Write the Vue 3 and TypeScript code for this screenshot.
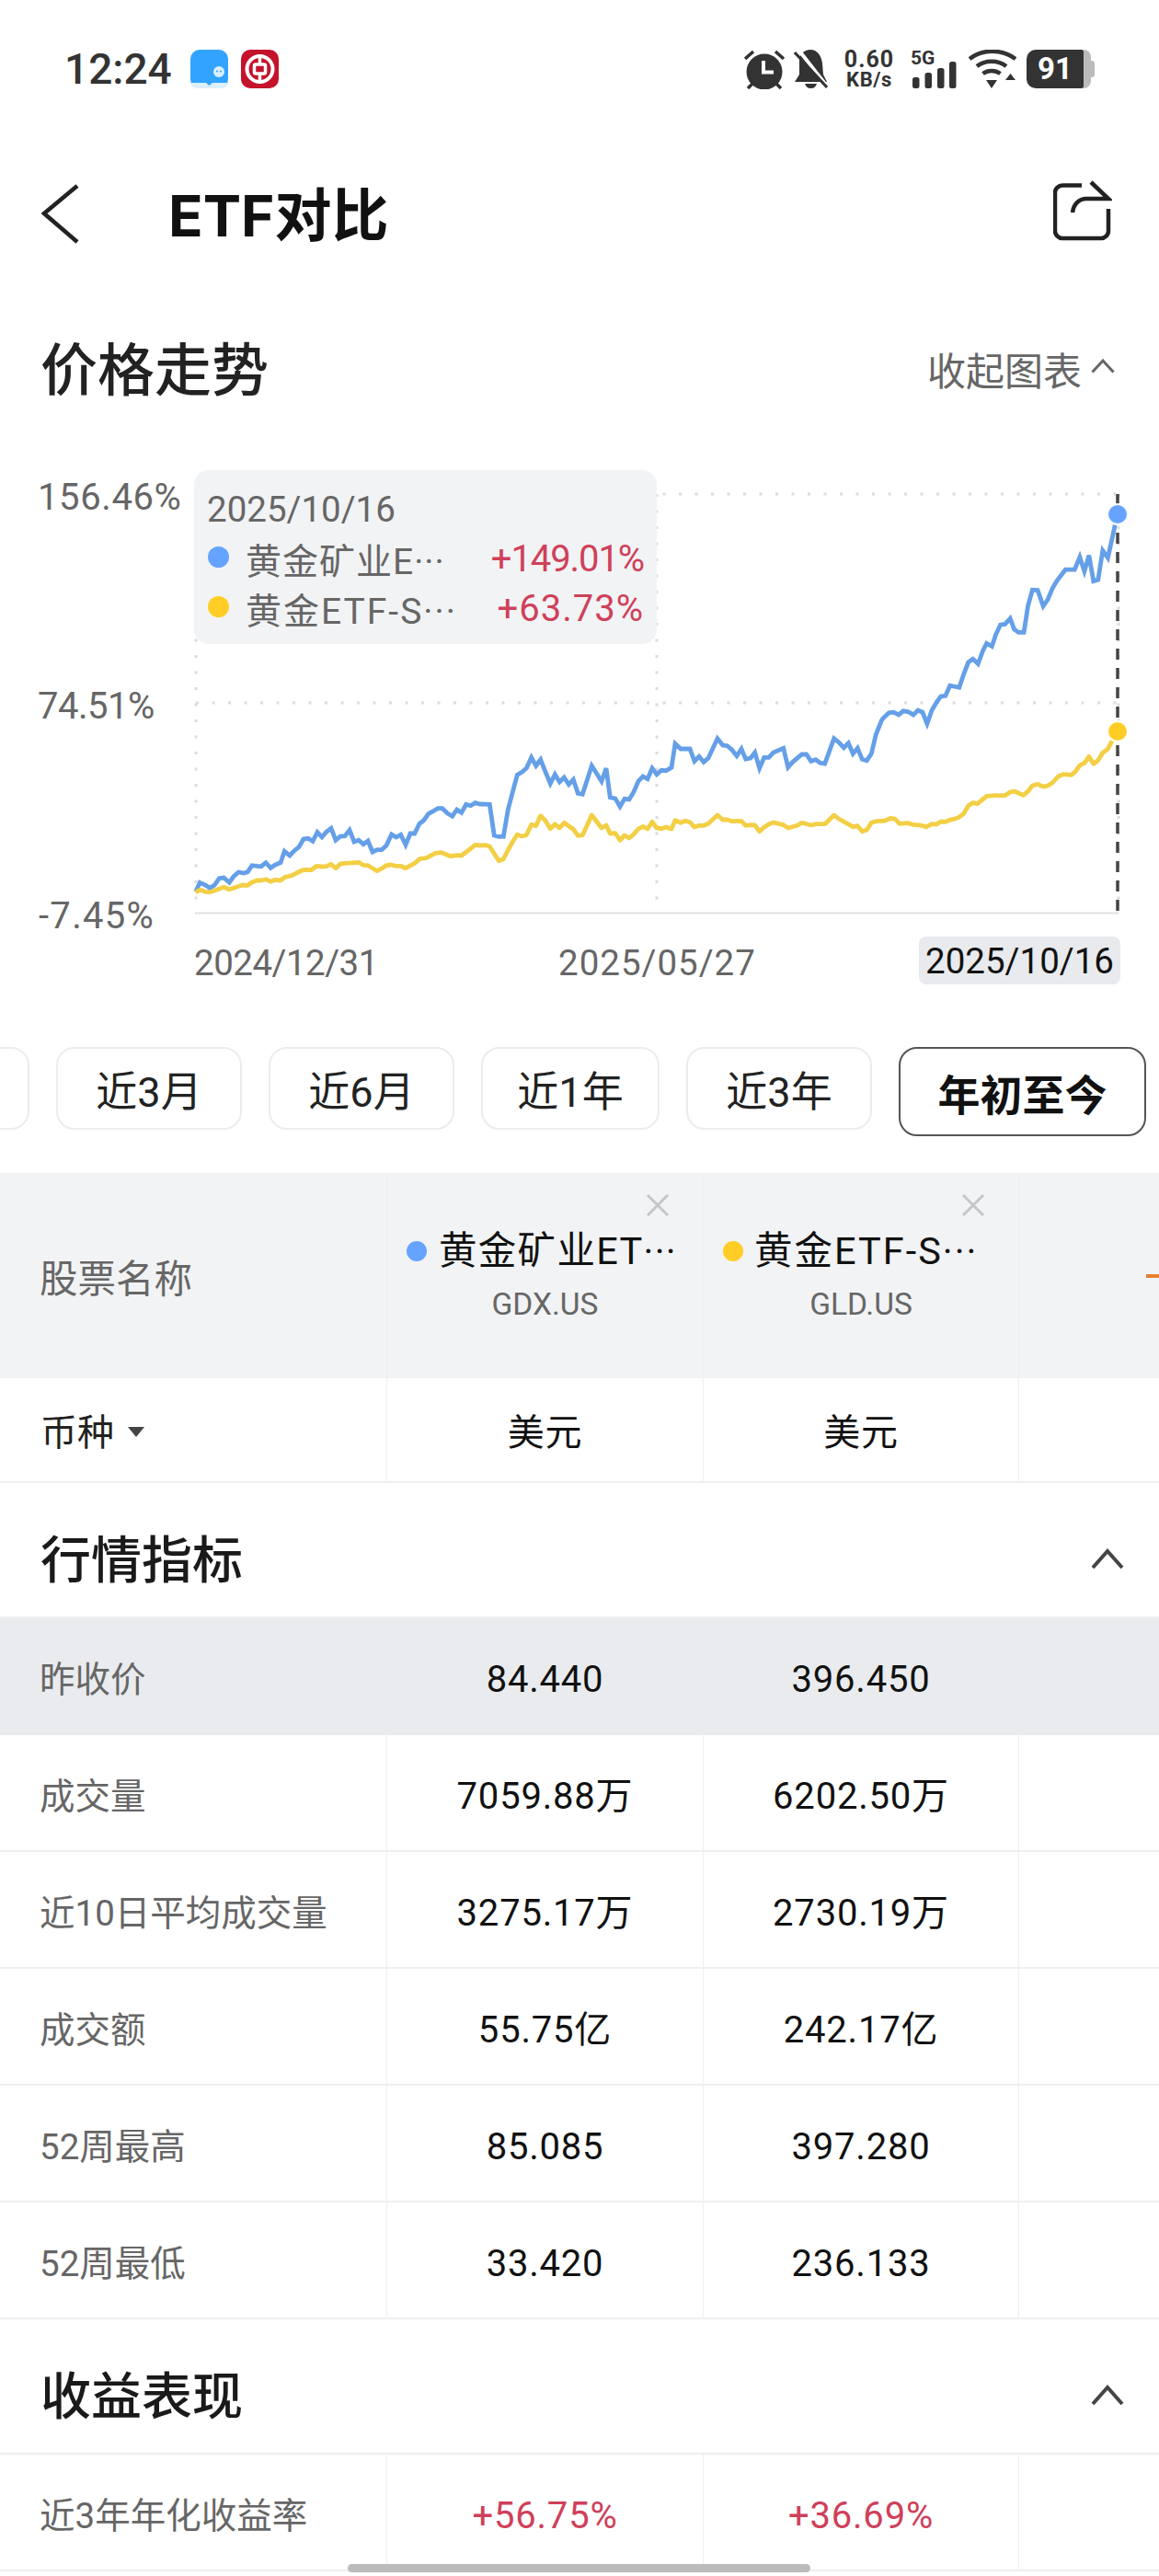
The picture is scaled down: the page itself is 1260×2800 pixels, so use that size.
<script setup lang="ts">
type P = [number, number]
const z9 = (a: number[]): P[] => chunk(a).map(([x, y]) => [200 + x / 3, 780 + y / 3])
const z10 = (a: number[]): P[] => chunk(a).map(([x, y]) => [560 + x / 3, 740 + y / 3])
const z11 = (a: number[]): P[] => chunk(a).map(([x, y]) => [900 + x / 3.012, 540 + y / 2.904])
function chunk(a: number[]): P[] {
  const r: P[] = []
  for (let i = 0; i < a.length; i += 2) r.push([a[i], a[i + 1]])
  return r
}
const toPts = (p: P[]) => p.map(([x, y]) => `${x.toFixed(1)},${y.toFixed(1)}`).join(' ')

const blue = toPts([
  ...z9([38,568,52,538,70,546,85,556,100,546,115,524,130,522,148,538,162,518,178,504,195,507,208,503,222,482,238,484,252,485,267,473,283,490,298,480,315,473,328,436,345,450,360,434,375,422,390,396,405,394,420,403,435,374,450,390,465,372,480,361,495,400,510,387,525,386,540,367,555,405,570,400,585,413,600,402,615,438,630,431,645,431,660,417,677,381,692,390,707,382,723,415,738,378,752,378,768,346,782,335,797,314,813,305,828,296,843,296,858,311,875,322,890,300,905,310,920,283,935,287,950,278,965,282,997,283,1012,384,1027,388,1042,388,1057,300,1072,243,1087,187,1102,178,1117,165,1133,130,1148,157,1163,137,1178,175,1195,215]),
  ...z10([130,305,145,330,160,315,175,338,190,322,205,367,220,370,250,277,282,328,297,285,310,380,327,384,342,410,357,385,372,387,387,362,402,327,417,312,432,320,447,285,462,305,477,292,492,293,510,283,522,205,540,222,570,222,585,262,600,247,615,265,630,252,660,188,677,210,692,212,707,225,723,245,738,222,752,255,768,252,782,234,797,285,812,250,827,250,842,234,875,220,890,282,905,265,935,240,950,240,965,262,980,257,995,268,1010,270,1040,188,1055,200,1072,218,1087,203,1102,238,1117,220,1132,256,1147,260,1162,238,1177,175,1195,130]),
  ...z11([180,700,200,682,215,680,232,688,247,676,262,678,280,688,295,674,310,680,325,716,340,675,355,650,370,630,385,628,400,596,430,602,445,560,460,522,475,512,492,527,508,485,520,463,537,472,550,435,565,404,580,402,597,384,610,418,625,428,642,428,655,345,670,294,687,295,705,345,720,325,735,290,750,265,778,230,808,230,825,190,840,235,855,185,870,266,885,262,900,170,917,193,938,100,947,55])
])
const gold = toPts([
  ...z9([38,570,52,562,70,568,85,569,100,564,130,553,148,560,162,556,190,546,208,547,222,537,238,531,252,531,267,527,283,535,298,529,315,531,330,520,352,515,385,498,400,496,415,497,433,484,450,486,465,485,480,478,495,491,510,477,525,475,570,472,585,481,600,482,630,500,645,492,660,482,675,480,690,484,707,484,723,491,752,475,770,460,790,458,820,442,840,440,870,452,890,449,905,450,925,435,950,415,965,417,985,416,997,420,1027,467,1042,461,1057,432,1072,405,1087,382,1102,387,1117,383,1133,349,1148,353,1163,320,1178,335,1195,362]),
  ...z10([130,467,145,480,160,463,175,474,190,484,205,505,220,503,250,438,282,480,297,471,310,498,327,497,342,520,357,504,372,513,387,500,402,483,417,475,432,483,447,460,462,480,477,482,492,477,510,483,522,455,540,463,555,457,570,461,585,477,600,472,615,472,630,466,660,438,677,453,692,453,707,458,738,457,752,472,768,470,782,471,797,491,812,478,827,468,842,462,875,470,890,480,920,472,935,463,965,471,980,467,1010,467,1040,438,1055,450,1102,476,1117,473,1132,491,1147,486,1162,463,1177,458,1195,457]),
  ...z11([185,1023,205,1015,220,1017,235,1032,262,1030,280,1035,305,1037,322,1042,340,1033,355,1034,370,1025,385,1026,400,1020,415,1017,430,1011,445,1000,460,975,475,966,490,969,520,945,550,943,580,943,597,932,612,930,640,942,655,930,670,912,687,907,705,915,720,912,735,903,755,882,770,876,797,878,810,868,825,848,840,840,855,820,870,843,885,832,900,808,917,796,947,740])
])

const ranges = ['近3月', '近6月', '近1年', '近3年']
const quoteRows = [
  { name: '昨收价', a: '84.440', b: '396.450', hot: true },
  { name: '成交量', a: '7059.88万', b: '6202.50万' },
  { name: '近10日平均成交量', a: '3275.17万', b: '2730.19万' },
  { name: '成交额', a: '55.75亿', b: '242.17亿' },
  { name: '52周最高', a: '85.085', b: '397.280' },
  { name: '52周最低', a: '33.420', b: '236.133' }
]
</script>

<template>
  <div class="page">
    <div class="status">
      <span class="time">12:24</span>
      <svg class="app app-first" viewBox="0 0 41 42">
        <rect width="41" height="42" rx="10" fill="#32a3ff" />
        <path d="M0 36h17l3.500 3 3.500-3h17c0 3-3 6-8 6H8c-5 0-8-3-8-6z" fill="#dcf0fb" />
        <circle cx="31" cy="24" r="6" fill="#d8f1ff" />
        <circle cx="29" cy="23.500" r="1" fill="#32a3ff" />
        <circle cx="33" cy="23.500" r="1" fill="#32a3ff" />
      </svg>
      <svg class="app app-second" viewBox="0 0 41 42">
        <rect width="41" height="42" rx="10" fill="#c4132b" />
        <circle cx="20.500" cy="21" r="14" fill="none" stroke="#fff" stroke-width="4" />
        <rect x="14.500" y="16" width="12" height="10" rx="1.500" fill="none" stroke="#fff" stroke-width="3.500" />
        <path d="M20.500 7v9M20.500 26v9" stroke="#fff" stroke-width="3.500" />
      </svg>
      <div class="status-right">
        <svg class="alarm" viewBox="0 0 44 43">
          <circle cx="22" cy="24" r="19.500" fill="#333" />
          <path d="M21 12v12.500h11" fill="none" stroke="#fff" stroke-width="4" />
          <path d="M1 10l9-8M34 2l9 8M4 42l6-6M34 36l6 6" stroke="#333" stroke-width="3.500" />
        </svg>
        <svg class="bell" viewBox="0 0 37 44">
          <path d="M18 1c8 0 12 7 13 15l1 12 4 8H1l5-8V13C6 6 11 1 18 1z" fill="#333" />
          <path d="M12 38h13c-1 3-3 5-6.500 5S13 41 12 38z" fill="#333" />
          <path d="M5 1l32 41" stroke="#fff" stroke-width="4" />
          <path d="M1 4l35 38" stroke="#333" stroke-width="3" />
        </svg>
        <div class="net"><span>0.60</span><span class="unit">KB/s</span></div>
        <div class="signal-wrap">
          <span class="five">5G</span>
          <svg class="signal" viewBox="0 0 50 42">
            <rect x="2" y="30" width="7.500" height="12" rx="2.500" fill="#333" />
            <rect x="15.500" y="25" width="7.500" height="17" rx="2.500" fill="#333" />
            <rect x="29" y="20" width="7.500" height="22" rx="2.500" fill="#333" />
            <rect x="42" y="13" width="7.500" height="29" rx="2.500" fill="#333" />
          </svg>
        </div>
        <svg class="wifi" viewBox="0 0 52 42">
          <g fill="none" stroke="#333" stroke-width="4.500">
            <path d="M1 10C15 -1 36 -1 51 10" />
            <path d="M9 18C18 11 32 11 41 18" />
            <path d="M15.500 26C21 22 29 22 34.500 26" />
          </g>
          <path d="M19 33h12l-6 9zM40 33h11l-5.500-7z" fill="#333" />
        </svg>
        <div class="battery"><span class="level">91</span><span class="rest"></span><span class="nub"></span></div>
      </div>
    </div>

    <div class="nav">
      <svg class="back" viewBox="0 0 42 66">
        <path d="M39 3L3 33l36 31" fill="none" stroke="#222" stroke-width="4.500" />
      </svg>
      <h1 class="title">ETF对比</h1>
      <svg class="share" viewBox="0 0 64 66">
        <path d="M31 5.500H10a8 8 0 0 0-8 8V55a8 8 0 0 0 8 8h42a8 8 0 0 0 8-8V31" fill="none" stroke="#222" stroke-width="4.500" />
        <path d="M41 2l19 18H36c-8 0-14 6-15 15" fill="none" stroke="#222" stroke-width="4.500" />
      </svg>
    </div>

    <div class="chart-head">
      <h2 class="chart-title">价格走势</h2>
      <div class="collapse">
        <span>收起图表</span>
        <svg viewBox="0 0 26 16"><path d="M1.500 14.500L13 2l11.500 12.500" fill="none" stroke="#666" stroke-width="3" /></svg>
      </div>
    </div>

    <div class="chart">
      <svg class="plot" viewBox="0 490 1260 600">
        <g stroke="#dcdcdc" stroke-width="3" stroke-dasharray="3 14.500" fill="none">
          <path d="M213 537H1216M213 764H1216" />
          <path d="M213 537V992M714 537V992M1216 537V992" />
        </g>
        <path d="M212 992.500H1216" stroke="#dfe0e2" stroke-width="2" />
        <polyline :points="blue" fill="none" stroke="#659fe8" stroke-width="4.800" stroke-linejoin="miter" />
        <polyline :points="gold" fill="none" stroke="#f3cf45" stroke-width="4.800" stroke-linejoin="round" />
        <path d="M1215 537V992" stroke="#444" stroke-width="3.500" stroke-dasharray="12 9" />
        <circle cx="1215" cy="559" r="12" fill="#fff" />
        <circle cx="1215" cy="559" r="10" fill="#66a3ff" />
        <circle cx="1215" cy="795" r="12" fill="#fff" />
        <circle cx="1215" cy="795" r="10" fill="#ffcd26" />
      </svg>

      <span class="ylab y1">156.46%</span>
      <span class="ylab y2">74.51%</span>
      <span class="ylab y3">-7.45%</span>
      <span class="xlab x1">2024/12/31</span>
      <span class="xlab x2">2025/05/27</span>
      <span class="xlab x3">2025/10/16</span>

      <div class="tip">
        <div class="tip-date">2025/10/16</div>
        <div class="tip-row">
          <i class="dot dot-blue"></i><span class="tip-name">黄金矿业E···</span><span class="tip-val tight">+149.01%</span>
        </div>
        <div class="tip-row">
          <i class="dot dot-gold"></i><span class="tip-name wide">黄金ETF-S···</span><span class="tip-val loose">+63.73%</span>
        </div>
      </div>
    </div>

    <div class="ranges">
      <div class="range range-cut"></div>
      <div v-for="r in ranges" :key="r" class="range">{{ r }}</div>
      <div class="range range-on">年初至今</div>
    </div>

    <div class="table">
      <div class="row head">
        <div class="cell label label-wide">股票名称</div>
        <div class="cell stock">
          <svg class="close" viewBox="0 0 26 26"><path d="M2 2l22 22M24 2L2 24" stroke="#c4c6c9" stroke-width="3" /></svg>
          <div class="stock-name"><i class="dot dot-blue"></i><span>黄金矿业ET···</span></div>
          <div class="code">GDX.US</div>
        </div>
        <div class="cell stock">
          <svg class="close" viewBox="0 0 26 26"><path d="M2 2l22 22M24 2L2 24" stroke="#c4c6c9" stroke-width="3" /></svg>
          <div class="stock-name"><i class="dot dot-gold"></i><span class="wide">黄金ETF-S···</span></div>
          <div class="code">GLD.US</div>
        </div>
        <div class="cell add"><i class="plus"></i></div>
      </div>

      <div class="row cur">
        <div class="cell label label-dark">币种<i class="tri"></i></div>
        <div class="cell val">美元</div>
        <div class="cell val">美元</div>
        <div class="cell"></div>
      </div>

      <div class="section">
        <h3>行情指标</h3>
        <svg viewBox="0 0 36 23"><path d="M2 21L18 3l16 18" fill="none" stroke="#444" stroke-width="4" /></svg>
      </div>

      <div v-for="q in quoteRows" :key="q.name" class="row" :class="{ hot: q.hot }">
        <div class="cell label">{{ q.name }}</div>
        <div class="cell val">{{ q.a }}</div>
        <div class="cell val">{{ q.b }}</div>
        <div class="cell"></div>
      </div>

      <div class="section">
        <h3>收益表现</h3>
        <svg viewBox="0 0 36 23"><path d="M2 21L18 3l16 18" fill="none" stroke="#444" stroke-width="4" /></svg>
      </div>

      <div class="row">
        <div class="cell label">近3年年化收益率</div>
        <div class="cell val up">+56.75%</div>
        <div class="cell val up">+36.69%</div>
        <div class="cell"></div>
      </div>
      <div class="row"></div>
    </div>

    <div class="home"></div>
  </div>
</template>

<style scoped>
.page {
  position: relative;
  width: 1260px;
  height: 2800px;
  overflow: hidden;
  background: #fff;
  font-family: Roboto, "Noto Sans CJK SC", sans-serif;
  color: #111;
}
.status {
  display: flex;
  align-items: center;
  height: 42px;
  padding: 54px 70px 54px 70px;
  color: #333;
}
.time {
  font-size: 46px;
  font-weight: 500;
  line-height: 42px;
  width: 117px;
  white-space: nowrap;
}
.app { width: 41px; height: 42px; flex: none; }
.app-first { margin-left: 20px; }
.app-second { margin-left: 14px; }
.status-right { display: flex; align-items: center; margin-left: auto; }
.alarm { width: 44px; height: 43px; }
.bell { width: 37px; height: 44px; margin-left: 10px; }
.net {
  display: flex;
  flex-direction: column;
  align-items: center;
  width: 54px;
  margin-left: 18px;
  font-size: 25px;
  font-weight: 700;
  line-height: 24px;
  letter-spacing: 1px;
}
.unit { font-size: 22px; line-height: 20px; letter-spacing: .6px; }
.signal-wrap { position: relative; width: 50px; height: 42px; margin-left: 18px; }
.signal { display: block; width: 50px; height: 42px; }
.five {
  position: absolute;
  left: 0;
  top: 0;
  font-size: 21px;
  font-weight: 700;
  line-height: 18px;
}
.wifi { width: 52px; height: 42px; margin-left: 13px; }
.battery { display: flex; align-items: center; margin-left: 11px; height: 42px; }
.level {
  width: 62px;
  height: 42px;
  border-radius: 10px 2px 2px 10px;
  background: #333;
  color: #fff;
  font-size: 33px;
  font-weight: 700;
  line-height: 42px;
  text-align: center;
}
.rest { width: 8px; height: 42px; border-radius: 0 8px 8px 0; background: #bbb; }
.nub { width: 4px; height: 18px; border-radius: 0 3px 3px 0; background: #bbb; }

.nav {
  display: flex;
  align-items: center;
  height: 164px;
  padding: 0 51px 0 45px;
}
.back { width: 42px; height: 66px; flex: none; }
.title {
  margin: 6px 0 0 96px;
  font-family: Inter, "Noto Sans CJK SC", sans-serif;
  font-size: 62px;
  font-weight: 700;
  line-height: 70px;
  color: #111;
}
.share { width: 64px; height: 66px; margin: -6px 0 0 auto; }

.chart-head {
  display: flex;
  align-items: center;
  justify-content: space-between;
  height: 176px;
  padding: 0 48px 0 44px;
}
.chart-title {
  margin: -8px 0 0;
  font-size: 62px;
  font-weight: 500;
  color: #222;
}
.collapse {
  display: flex;
  align-items: center;
  gap: 10px;
  margin-top: -4px;
  font-size: 42px;
  color: #666;
}
.collapse svg { width: 26px; height: 16px; margin-top: -4px; }

.chart { position: relative; height: 600px; }
.plot { position: absolute; left: 0; top: 0; width: 1260px; height: 600px; }
.ylab, .xlab {
  position: absolute;
  font-size: 40px;
  line-height: 48px;
  color: #666;
  white-space: nowrap;
}
.ylab { left: 41px; }
.y1 { top: 27px; letter-spacing: .6px; }
.y2 { top: 254px; letter-spacing: -.5px; }
.y3 { top: 482px; left: 42px; letter-spacing: 1.300px; }
.xlab { top: 533px; font-size: 38.500px; }
.x1 { left: 211px; letter-spacing: -.5px; }
.x2 { left: 607px; letter-spacing: 1px; }
.x3 {
  left: 999px;
  top: 528px;
  width: 219px;
  height: 52px;
  line-height: 54px;
  text-align: center;
  border-radius: 8px;
  background: #e8eaed;
  color: #111;
}

.tip {
  position: absolute;
  left: 211px;
  top: 21px;
  width: 503px;
  height: 189px;
  box-sizing: border-box;
  padding: 17px 14px 12px 14px;
  border-radius: 16px;
  background: #f2f3f5;
  color: #666;
  font-size: 39px;
}
.tip-date { line-height: 52px; font-size: 38.500px; }
.tip-row { display: flex; align-items: center; height: 54px; }
.tip-row .dot { margin: -3px 0 0 1px; }
.tip-name { margin-left: 18px; white-space: nowrap; letter-spacing: 1px; }
.tip-name.wide { letter-spacing: 2px; }
.tip-val { margin-left: auto; color: #cf4059; font-size: 40px; white-space: nowrap; }
.tight { letter-spacing: -1.100px; }
.loose { letter-spacing: 1px; }
.dot { display: block; flex: none; width: 23px; height: 23px; border-radius: 50%; }
.dot-blue { background: #66a3ff; }
.dot-gold { background: #ffcd26; }

.ranges {
  display: flex;
  align-items: center;
  gap: 29px;
  width: 1260px;
  height: 97px;
  margin: 48px 0 40px;
  overflow: hidden;
}
.range {
  flex: none;
  box-sizing: border-box;
  display: flex;
  align-items: center;
  justify-content: center;
  width: 202px;
  height: 90px;
  margin-bottom: 7px;
  border: 2px solid #ececee;
  border-radius: 20px;
  font-size: 45px;
  color: #222;
  white-space: nowrap;
}
.range:nth-child(4) { width: 194px; }
.range-cut { margin-left: -170px; }
.range-on {
  width: 269px;
  height: 97px;
  margin-bottom: 0;
  border-color: #555;
  font-size: 46px;
  font-weight: 700;
  color: #111;
}

.row {
  display: grid;
  grid-template-columns: 420px 344px 343px 153px;
  height: 127px;
  box-sizing: border-box;
  border-bottom: 2px solid #eeeff0;
}
.cell {
  display: flex;
  align-items: center;
  justify-content: center;
  box-sizing: border-box;
  min-width: 0;
  padding-top: 8px;
  border-left: 1px solid #eeeff0;
  font-size: 40px;
  line-height: 48px;
  color: #111;
}
.val { letter-spacing: .8px; }
.label {
  justify-content: flex-start;
  padding-left: 43px;
  border-left: 0;
  font-size: 38.500px;
  letter-spacing: 0;
  color: #666;
}
.label-wide { font-size: 41.500px; }
.label-dark { padding-left: 44px; font-size: 40px; color: #222; }
.tri {
  display: block;
  width: 0;
  height: 0;
  margin: -4px 0 0 15px;
  border-left: 9px solid transparent;
  border-right: 9px solid transparent;
  border-top: 11px solid #444;
}
.hot { background: #e9ebee; border-bottom-color: #e9ebee; }
.hot .cell { border-left-color: transparent; }
.head { height: 223px; background: #f2f3f5; border-bottom: 0; }
.cur { height: 114px; }
.stock {
  position: relative;
  flex-direction: column;
  justify-content: flex-start;
  padding-top: 62px;
}
.close { position: absolute; top: 22px; right: 36px; width: 26px; height: 26px; }
.stock-name {
  display: flex;
  align-items: center;
  align-self: flex-start;
  height: 46px;
  margin-left: 21px;
  font-size: 41.500px;
  white-space: nowrap;
}
.stock-name span { margin-left: 13px; letter-spacing: 1.300px; }
.stock-name span.wide { margin-left: 12px; letter-spacing: 2px; }
.stock-name .dot { width: 22px; height: 22px; }
.code { margin-top: 15px; font-size: 33.500px; line-height: 40px; color: #666; }
.add { justify-content: flex-end; padding-top: 0; }
.plus { display: block; width: 14px; height: 4px; background: #e8802f; }

.section {
  display: flex;
  align-items: center;
  justify-content: space-between;
  box-sizing: border-box;
  height: 147px;
  padding: 20px 38px 0 44px;
  border-bottom: 2px solid #eeeff0;
}
.section h3 { margin: -7px 0 0; font-size: 55px; font-weight: 500; color: #1a1a1a; }
.section svg { width: 36px; height: 23px; }
.up { color: #cf4059; }

.home {
  position: absolute;
  left: 378px;
  top: 2787px;
  width: 503px;
  height: 9px;
  border-radius: 5px;
  background: #bbb;
}
</style>
